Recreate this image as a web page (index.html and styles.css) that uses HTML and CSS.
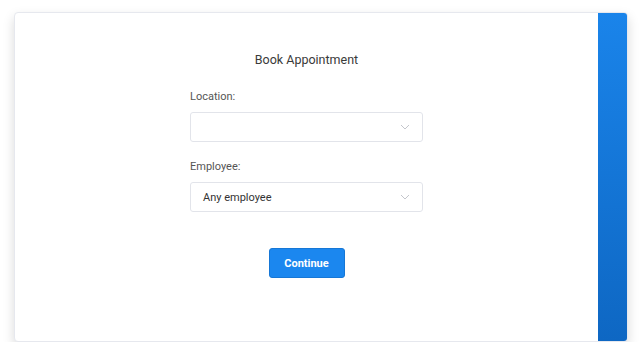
FILE: index.html
```html
<!DOCTYPE html>
<html lang="en">
<head>
    <meta charset="UTF-8">
    <meta name="viewport" content="width=device-width, initial-scale=1.0">
    <title>Book Appointment</title>
    <link rel="stylesheet" href="styles.css">
</head>
<body>
    <div class="booking-card">
        <section class="booking-main">
            <h2 class="booking-title">Book Appointment</h2>
            <form class="booking-form" onsubmit="return false">
                <label class="field-label" for="location">Location:</label>
                <div class="select-box" id="location">
                    <span class="select-value"></span>
                    <svg class="select-arrow" width="10" height="6" viewBox="0 0 10 6"><path d="M1 1l4 4 4-4" fill="none" stroke="#c4c6cc" stroke-width="1"/></svg>
                </div>
                <label class="field-label" for="employee">Employee:</label>
                <div class="select-box" id="employee">
                    <span class="select-value">Any employee</span>
                    <svg class="select-arrow" width="10" height="6" viewBox="0 0 10 6"><path d="M1 1l4 4 4-4" fill="none" stroke="#c4c6cc" stroke-width="1"/></svg>
                </div>
                <div class="button-row">
                    <button class="continue-button" type="submit">Continue</button>
                </div>
            </form>
        </section>
        <aside class="booking-side"></aside>
    </div>
</body>
</html>
```

FILE: styles.css
```css
body {
    font-family: Roboto, "Liberation Sans", Arial, sans-serif;
    margin: 0;
    padding: 12px 12px 0 14px;
    background-color: #ffffff;
}
.booking-card {
    display: flex;
    height: 330px;
    background-color: #ffffff;
    border: 1px solid #e6e8ee;
    border-radius: 4px;
    box-shadow: 0 5px 12px rgba(0, 0, 0, 0.15);
    overflow: hidden;
    box-sizing: border-box;
}
.booking-main {
    flex: 1;
    padding-top: 39px;
}
.booking-title {
    margin: 0 0 22px;
    font-size: 12.5px;
    line-height: 16px;
    font-weight: 400;
    color: #3a3a3a;
    text-align: center;
}
.booking-form {
    width: 233px;
    margin: 0 auto;
}
.field-label {
    display: block;
    font-size: 11px;
    line-height: 14px;
    color: #555555;
    margin-bottom: 8px;
}
.select-box {
    display: flex;
    align-items: center;
    justify-content: space-between;
    height: 30px;
    padding: 0 12px 0 12px;
    border: 1px solid #e2e4ea;
    border-radius: 3px;
    box-sizing: border-box;
    margin-bottom: 18px;
}
.select-value {
    font-size: 11px;
    color: #333333;
}
.select-arrow {
    display: block;
}
.button-row {
    display: flex;
    justify-content: center;
    padding-top: 18px;
}
.continue-button {
    width: 76px;
    height: 30px;
    background-color: #1b87ef;
    color: #ffffff;
    font-family: Roboto, "Liberation Sans", Arial, sans-serif;
    font-size: 11px;
    font-weight: bold;
    border: 1px solid #1677d6;
    border-radius: 3px;
    cursor: pointer;
}
.booking-side {
    width: 29px;
    background: linear-gradient(to bottom, #1a84ea, #0e67c3);
}
```
